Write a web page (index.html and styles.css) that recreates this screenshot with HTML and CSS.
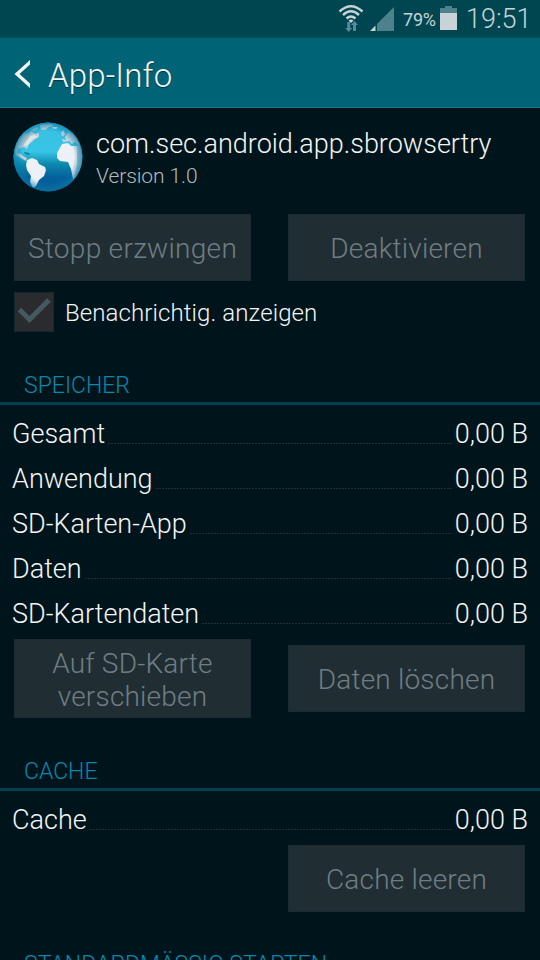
FILE: index.html
```html
<!DOCTYPE html>
<html lang="de">
<head>
    <meta charset="UTF-8">
    <meta name="viewport" content="width=device-width, initial-scale=1.0">
    <title>App-Info</title>
    <link rel="stylesheet" href="styles.css">
</head>
<body>
    <div class="statusbar">
        <svg class="wifi" width="26" height="28" viewBox="0 0 26 28">
            <g fill="none" stroke="#c7d3d6" stroke-width="2.4">
                <path d="M1.500 7.500Q13-3 24.500 7.500"/>
                <path d="M5 11Q13 3.500 21 11"/>
                <path d="M8.500 14.500Q13 10.500 17.500 14.500"/>
            </g>
            <path d="M10.500 16.500Q13 14.500 15.500 16.500L13 19Z" fill="#c7d3d6"/>
            <path d="M9.200 18h3v6h2l-3.500 4-3.500-4h2zM15 27v-6h-2l3.500-4 3.500 4h-2v6z" fill="#578a94"/>
        </svg>
        <svg class="signal" width="24" height="24" viewBox="0 0 24 24">
            <path d="M24 0V24H7V17Z" fill="#4d818b"/>
            <path d="M5.500 18.500V24H0Z" fill="#c7d3d6"/>
        </svg>
        <span class="percent">79%</span>
        <svg class="battery" width="17" height="24" viewBox="0 0 17 24">
            <path d="M5 0h7v2h5v5H0V2h5z" fill="#4d818b"/>
            <path d="M0 7h17v17H0z" fill="#c7d3d6"/>
        </svg>
        <span class="clock">19:51</span>
    </div>

    <div class="header">
        <svg class="back" width="16" height="28" viewBox="0 0 16 28">
            <path d="M16 0V4.500L5.500 14L16 23.500V28L.500 14Z" fill="#f5f5f5"/>
        </svg>
        <h1>App-Info</h1>
    </div>

    <div class="content">
        <div class="app">
            <svg class="globe" width="70" height="70" viewBox="0 0 70 70">
                <defs>
                    <linearGradient id="sea" x1="0" y1="0" x2="0" y2="1">
                        <stop offset="0" stop-color="#39bfe0"/>
                        <stop offset=".42" stop-color="#36c5e6"/>
                        <stop offset=".6" stop-color="#0d8aae"/>
                        <stop offset=".8" stop-color="#055f9b"/>
                        <stop offset="1" stop-color="#075e93"/>
                    </linearGradient>
                    <radialGradient id="shade" cx=".5" cy=".5" r=".5">
                        <stop offset=".75" stop-color="#0879a8" stop-opacity="0"/>
                        <stop offset="1" stop-color="#0879a8" stop-opacity=".7"/>
                    </radialGradient>
                    <clipPath id="ball"><circle cx="35" cy="35" r="34"/></clipPath>
                </defs>
                <circle cx="35" cy="35" r="34.500" fill="url(#sea)"/>
                <g clip-path="url(#ball)" fill="#edf0f4">
                    <!-- North America -->
                    <path d="M2 30L4 20L11 11L15 12L18 9L22 12L26 11L26 15L22 17L19 20L16 22L14 27L11 25L5 27L4 31L8 32L10 34L14 36L13 39L8 36L3 33Z" fill="#c3cdd5"/>
                    <path d="M17 14L21 13L25 15L20 17L15 23L10 24Z" fill="#dfe4e8"/>
                    <path d="M17 8L24 5L25 7L21 9Z" fill="#b3cad6"/>
                    <!-- Greenland and Iceland -->
                    <path d="M27 3L38 2L41 4L36 5L32 8L28 8Z" fill="#c7d6df"/>
                    <path d="M40 5L45 5L43 7L39 6Z"/>
                    <!-- Cuba -->
                    <path d="M11 30L16 31L17 33L12 32Z" fill="#0c7ba3"/>
                    <!-- South America -->
                    <path d="M14 38L19 36L24 38L26 42L32 45L33 48L31 54L26 58L23 64L20 66L17 60L18 54L14 48L13 43Z"/>
                    <!-- Europe -->
                    <path d="M48 10L51 8L52 13L49 14ZM52 15L55 10L61 13L66 21L66 24L62 20L59 22L56 19L50 20L49 17L53 18Z" fill="#c9d6df"/>
                    <!-- Africa -->
                    <path d="M49 22L55 21L58 24L66 24L70 33L69 43L64 56L60 57L58 47L55 40L47 39L44 36L44 31Z"/>
                    <path d="M64 23L67 24L70 34L66 53L60 60L64 42Z" fill="#b4c8d7"/>
                </g>
                <circle cx="35" cy="35" r="34.500" fill="url(#shade)"/>
            </svg>
            <div class="app-text">
                <div class="app-name">com.sec.android.app.sbrowsertry</div>
                <div class="app-version">Version 1.0</div>
            </div>
        </div>

        <div class="buttons">
            <button class="stop" disabled>Stopp erzwingen</button>
            <button disabled>Deaktivieren</button>
        </div>

        <div class="notify">
            <span class="checkbox">
                <svg width="40" height="40" viewBox="0 0 40 40">
                    <path d="M5.500 17.500L15.500 27.500L35 8" fill="none" stroke="#455960" stroke-width="5"/>
                </svg>
            </span>
            <span class="notify-label">Benachrichtig. anzeigen</span>
        </div>

        <h2 class="storage-title">SPEICHER</h2>
        <div class="row"><span class="name">Gesamt</span><i class="dots"></i><span class="value">0,00 B</span></div>
        <div class="row"><span class="name">Anwendung</span><i class="dots"></i><span class="value">0,00 B</span></div>
        <div class="row"><span class="name">SD-Karten-App</span><i class="dots"></i><span class="value">0,00 B</span></div>
        <div class="row"><span class="name">Daten</span><i class="dots"></i><span class="value">0,00 B</span></div>
        <div class="row"><span class="name">SD-Kartendaten</span><i class="dots"></i><span class="value">0,00 B</span></div>
        <div class="buttons storage-buttons">
            <button class="tall" disabled>Auf SD-Karte<br>verschieben</button>
            <button disabled>Daten löschen</button>
        </div>

        <h2 class="cache-title">CACHE</h2>
        <div class="row"><span class="name">Cache</span><i class="dots"></i><span class="value">0,00 B</span></div>
        <div class="buttons cache-buttons">
            <button disabled>Cache leeren</button>
        </div>

        <h2 class="default-title">STANDARDMÄSSIG STARTEN</h2>
    </div>
</body>
</html>
```
FILE: styles.css
```css
* {
    box-sizing: border-box;
}
body {
    font-family: Roboto, sans-serif;
    font-weight: 300;
    margin: 0;
    width: 540px;
    height: 960px;
    overflow: hidden;
    display: flex;
    flex-direction: column;
    background-color: #00141b;
    color: #f5f5f5;
}
svg {
    display: block;
    flex: none;
}

/* Status bar */
.statusbar {
    height: 37px;
    flex: none;
    display: flex;
    align-items: flex-start;
    padding-left: 338px;
    background-color: #004651;
    color: #c7d3d6;
    white-space: nowrap;
}
.wifi {
    margin-top: 4px;
}
.signal {
    margin: 7px 0 0 6px;
}
.percent {
    font-size: 18px;
    font-weight: 400;
    line-height: 20px;
    letter-spacing: -0.2px;
    margin: 10px 0 0 9px;
    width: 37px;
}
.battery {
    margin-top: 6px;
}
.clock {
    font-size: 27px;
    line-height: 32px;
    margin: 3px 0 0 9px;
}

/* Title bar */
.header {
    height: 71px;
    flex: none;
    display: flex;
    align-items: center;
    padding: 0 0 0 14px;
    background-color: #006376;
    border-top: 1px solid #00505f;
    border-bottom: 1px solid #257583;
}
.back {
    margin-top: 2px;
}
h1 {
    font-size: 33px;
    font-weight: 300;
    line-height: 40px;
    letter-spacing: 0.15px;
    margin: 6px 0 0 18px;
    text-shadow: 0 1px 1px #003540;
}

.content {
    flex: none;
}
.app {
    display: flex;
    padding: 14px 0 0 13px;
    height: 106px;
}
.app-text {
    margin-left: 13px;
}
.app-name {
    font-size: 27px;
    line-height: 32px;
    margin-top: 6px;
    white-space: nowrap;
}
.app-version {
    font-size: 21px;
    line-height: 24px;
    letter-spacing: -0.1px;
    margin-top: 4px;
    color: #b4babd;
}

/* Buttons */
.buttons {
    display: flex;
    align-items: center;
    justify-content: space-between;
    padding: 0 15px 0 14px;
}
button {
    width: 237px;
    height: 67px;
    padding: 2px 0 0;
    border: 1px solid #1b2b31;
    background-color: #202e33;
    color: #707d82;
    font: 300 28px/33px Roboto, sans-serif;
    letter-spacing: 0.2px;
}
button.stop {
    letter-spacing: 0.3px;
}
button.tall {
    height: 79px;
}
.storage-buttons {
    margin-top: 4px;
}
.cache-buttons {
    justify-content: flex-end;
    margin-top: 4px;
}

/* Notification checkbox */
.notify {
    display: flex;
    align-items: center;
    height: 40px;
    margin: 11px 0 0 14px;
}
.checkbox {
    width: 40px;
    height: 40px;
    background-color: #2a2b2e;
    box-shadow: inset 0 0 0 1px #12292f;
}
.notify-label {
    font-size: 24px;
    line-height: 28px;
    letter-spacing: 0.1px;
    margin-left: 11px;
    margin-top: 2px;
}

/* Sections */
h2 {
    font-size: 23px;
    font-weight: 300;
    line-height: 27px;
    margin: 0;
    padding-left: 24px;
    color: #0888ad;
    border-bottom: 3px solid #00414e;
}
.storage-title,
.cache-title {
    padding-top: 40px;
    padding-bottom: 3px;
    margin-bottom: 5px;
}
.default-title {
    padding-top: 39px;
    padding-bottom: 4px;
}
.row {
    display: flex;
    height: 45px;
    align-items: center;
    padding: 4px 12px 0;
    font-size: 27px;
    line-height: 33px;
}
.dots {
    flex: 1;
    height: 1px;
    margin: 17px 3px 0;
    background: repeating-linear-gradient(90deg, #1b3037 0 2px, transparent 2px 3px);
}
```
